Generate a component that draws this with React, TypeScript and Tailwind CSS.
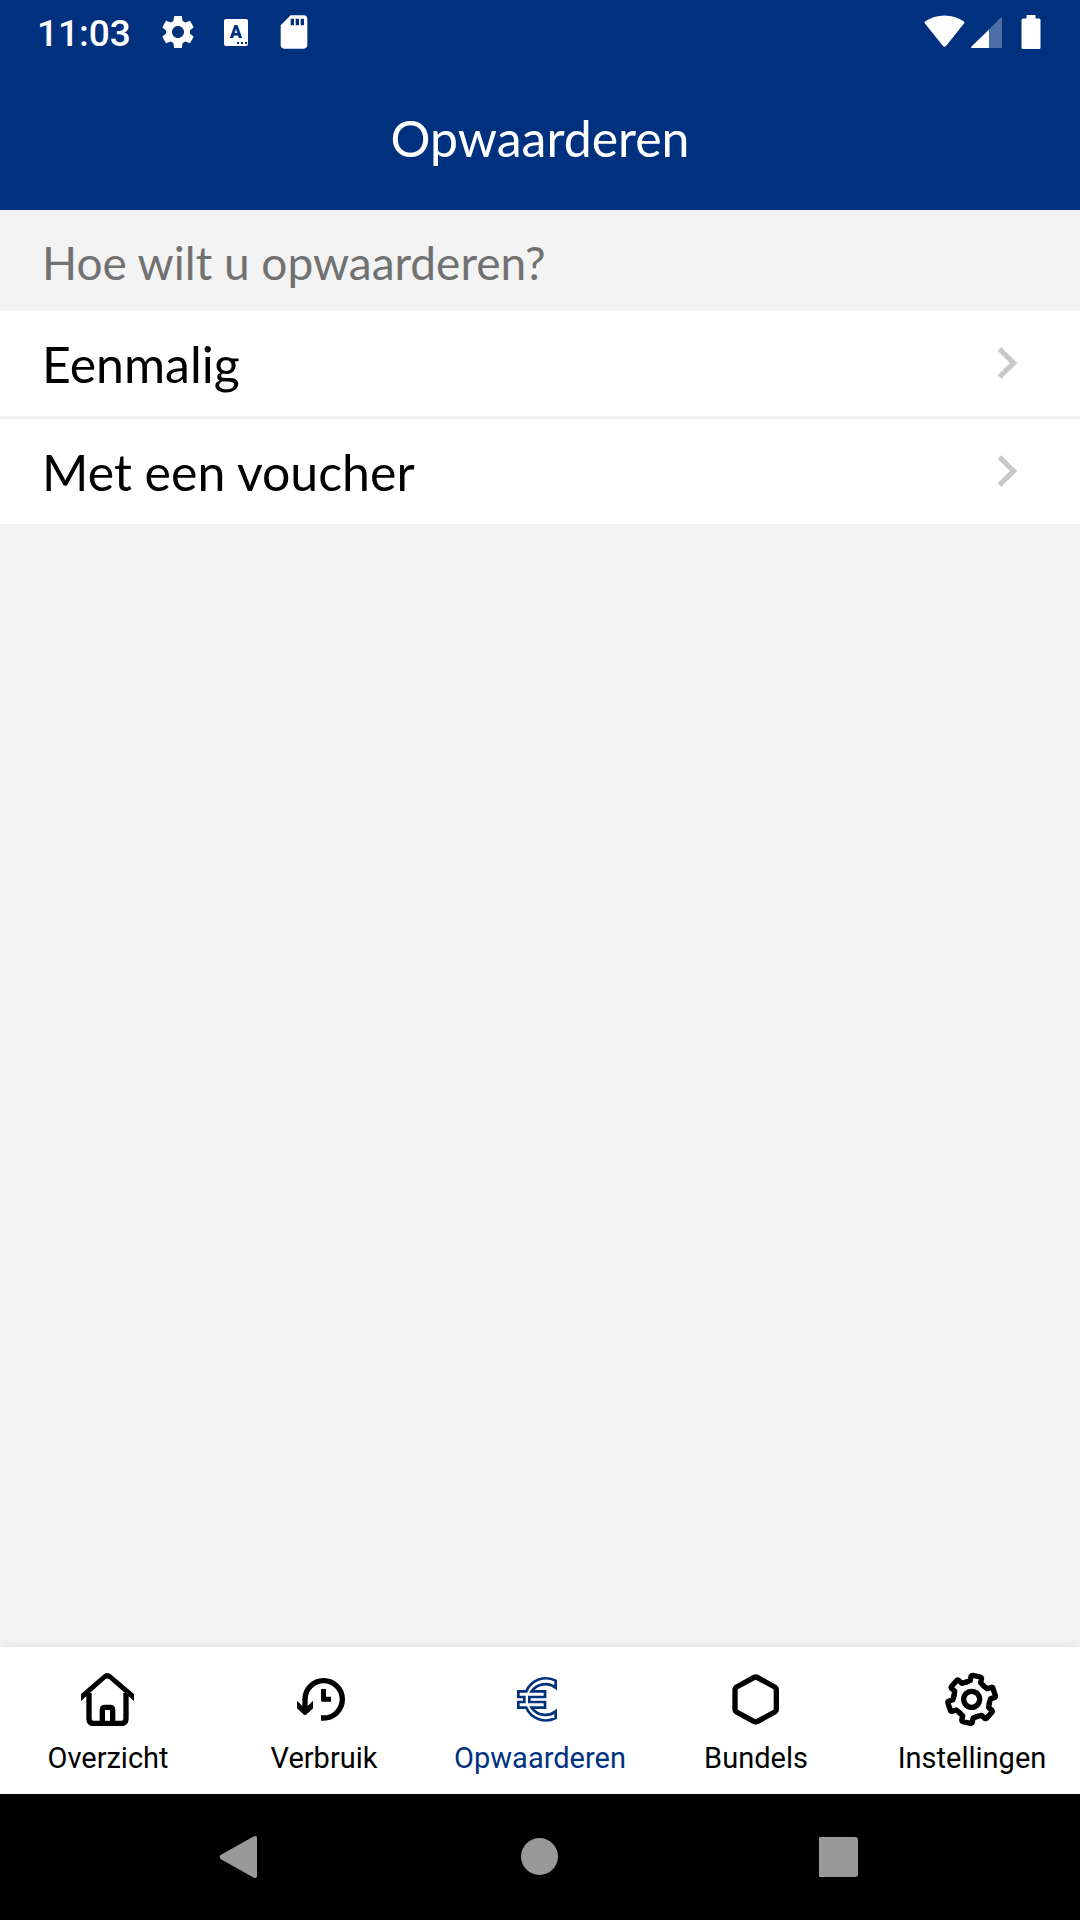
import type { ReactNode } from "react";
import { MdSdCard, MdSettings } from "react-icons/md";

type Tab = {
  label: string;
  icon: ReactNode;
  active?: boolean;
};

const options: string[] = ["Eenmalig", "Met een voucher"];

const tabs: Tab[] = [
  { label: "Overzicht", icon: <HomeIcon /> },
  { label: "Verbruik", icon: <HistoryIcon /> },
  { label: "Opwaarderen", icon: <EuroIcon />, active: true },
  { label: "Bundels", icon: <HexagonIcon /> },
  { label: "Instellingen", icon: <GearIcon /> },
];

export default function App() {
  return (
    <div className="min-h-screen flex flex-col bg-[#f3f3f3] text-black font-['Lato',sans-serif]">
      <header className="bg-[#00317f] text-white">
        <StatusBar />
        <h1 className="h-[147px] pt-[2px] flex items-center justify-center text-[50px] leading-[60px]">
          Opwaarderen
        </h1>
      </header>

      <main className="flex-1">
        <h2 className="px-[42px] pt-[22px] pb-[18px] text-[46px] leading-[61px] text-[#717171]">
          Hoe wilt u opwaarderen?
        </h2>
        <ul className="flex flex-col gap-[3px]">
          {options.map((option) => (
            <li key={option}>
              <button
                type="button"
                className="w-full h-[105px] pl-[42px] pr-[63px] flex items-center justify-between bg-white text-[50px] leading-[60px] cursor-pointer"
              >
                {option}
                <ChevronIcon />
              </button>
            </li>
          ))}
        </ul>
      </main>

      <nav className="grid grid-cols-5 h-[147px] bg-white font-['Roboto',sans-serif] shadow-[0_0_10px_rgba(0,0,0,0.1)]">
        {tabs.map((tab) => (
          <a
            key={tab.label}
            href="#"
            className={
              tab.active
                ? "flex flex-col items-center gap-3 pt-[22px] text-[#00317f]"
                : "flex flex-col items-center gap-3 pt-[22px]"
            }
          >
            {tab.icon}
            <span className="text-[29px] leading-[34px]">{tab.label}</span>
          </a>
        ))}
      </nav>

      <SystemNav />
    </div>
  );
}

function StatusBar() {
  return (
    <div className="h-[63px] pl-[37px] pr-[39px] flex items-center justify-between font-['Roboto',sans-serif]">
      <div className="flex items-center">
        <span className="text-[37px] leading-[40px] font-medium pt-1">11:03</span>
        <div className="flex items-center gap-[18px] ml-[27px]">
          <MdSettings className="size-10" />
          <svg viewBox="0 0 40 40" className="size-10">
            <rect x="8" y="7" width="24" height="27" rx="2" fill="currentColor" />
            <text
              x="20"
              y="26"
              textAnchor="middle"
              fontSize="18"
              fontWeight="900"
              fontFamily="Roboto, sans-serif"
              fill="#00317f"
            >
              A
            </text>
            <path d="M21 30h2v2h-2zM25 30h2v2h-2zM29 30h2v2h-2z" fill="#00317f" />
          </svg>
          <MdSdCard className="size-10" />
        </div>
      </div>

      <div className="flex items-center">
        {/* Wifi */}
        <svg viewBox="0 0 41 34" className="w-[41px] h-[34px]" fill="currentColor">
          <path d="M1 8.500Q0 7.500 1 6.500C12 -1.500 29 -1.500 40 6.500Q41 7.500 40 8.500L22 31Q20.500 32.500 19 31Z" />
        </svg>
        {/* Signal */}
        <svg viewBox="0 0 32 34" className="w-8 h-[34px] ml-[6px]" fill="currentColor">
          <path d="M18 14.500L29.500 3Q31 2 31 4V32Q31 33 30 33H18Z" opacity="0.3" />
          <path d="M18 14.500V33H1Q-0.500 33 0.500 31.500Z" />
        </svg>
        {/* Battery */}
        <svg viewBox="0 0 20 34" className="w-5 h-[34px] ml-[18px]" fill="currentColor">
          <path d="M5.500 0H14.500V3.500H18Q19.500 3.500 19.500 5V32.500Q19.500 34 18 34H2Q0.500 34 0.500 32.500V5Q0.500 3.500 2 3.500H5.500Z" />
        </svg>
      </div>
    </div>
  );
}

function SystemNav() {
  return (
    <div className="bg-black text-[#999999]">
      <div className="w-5/6 h-[126px] mx-auto grid grid-cols-3 place-items-center">
        <button type="button" aria-label="Back" className="cursor-pointer">
          <svg viewBox="0 0 42 42" className="size-[42px]" fill="currentColor">
            <path d="M1.500 19L34.500 0.500Q38 -1 38 2V40Q38 43 34.500 41.500L1.500 23Q0 21 1.500 19Z" />
          </svg>
        </button>
        <button type="button" aria-label="Home" className="cursor-pointer">
          <svg viewBox="0 0 42 42" className="size-[42px]" fill="currentColor">
            <circle cx="20.500" cy="20.500" r="18.500" />
          </svg>
        </button>
        <button type="button" aria-label="Recent" className="cursor-pointer">
          <svg viewBox="0 0 42 42" className="size-[42px]" fill="currentColor">
            <rect x="-1" y="1" width="40" height="40" rx="3" />
          </svg>
        </button>
      </div>
    </div>
  );
}

function ChevronIcon() {
  return (
    <svg viewBox="0 0 20 34" className="w-5 h-[34px]" fill="none">
      <path d="M2.500 2L16.500 16L2.500 30" stroke="#c7c7cc" strokeWidth="5.200" />
    </svg>
  );
}

function HomeIcon() {
  return (
    <svg viewBox="0 0 180 180" className="size-[60px]" fill="none">
      <path
        d="M9 75L76 17Q88 7 100 17L168 75V96L94 31Q88 26 82 31L9 96Z"
        fill="currentColor"
      />
      <path
        d="M33 72V149Q33 163 47 163H130Q144 163 144 149V72M73 163V123Q73 115 81 115H96Q104 115 104 123V163"
        stroke="currentColor"
        strokeWidth="16"
      />
    </svg>
  );
}

function HistoryIcon() {
  return (
    <svg viewBox="0 0 180 180" className="size-[60px]" fill="none">
      <path
        d="M33 120V91A56 56 0 1 1 89 147H81"
        stroke="currentColor"
        strokeWidth="16"
      />
      <path
        d="M9 95L25 111H41L57 95V118L38 136Q33 141 28 136L9 118ZM81 60H96V83H111V98H85Q81 98 81 94Z"
        fill="currentColor"
      />
    </svg>
  );
}

function EuroIcon() {
  return (
    <svg viewBox="0 0 180 180" className="size-[60px]" fill="none">
      <path
        d="M137 35A64 64 0 0 0 49 67H25V84H43V99H25V116H49A64 64 0 0 0 137 147V127A50 50 0 0 1 65 116H105V99H58V84H105V67H65A50 50 0 0 1 137 56Z"
        stroke="currentColor"
        strokeWidth="8"
      />
    </svg>
  );
}

function HexagonIcon() {
  return (
    <svg viewBox="0 0 180 180" className="size-[60px]" fill="none">
      <path
        d="M83 26Q89 22 95 26L146 54Q151 57 151 63V120Q151 126 146 129L95 157Q89 161 83 157L32 129Q27 126 27 120V63Q27 57 32 54Z"
        stroke="currentColor"
        strokeWidth="16"
      />
    </svg>
  );
}

function GearIcon() {
  return (
    <svg
      viewBox="0 0 180 180"
      className="size-[60px]"
      fill="none"
      stroke="currentColor"
      strokeWidth="16"
      strokeLinecap="round"
      strokeLinejoin="round"
    >
      <circle cx="89" cy="91" r="24" />
      {[12, 72, 132, 192, 252, 312].map((angle) => (
        <path
          key={angle}
          d="M-27 -47L-16 -54V-68Q-15 -71 -12 -71H12Q15 -71 16 -68V-54L27 -47"
          transform={`translate(89 91) rotate(${angle})`}
        />
      ))}
    </svg>
  );
}
